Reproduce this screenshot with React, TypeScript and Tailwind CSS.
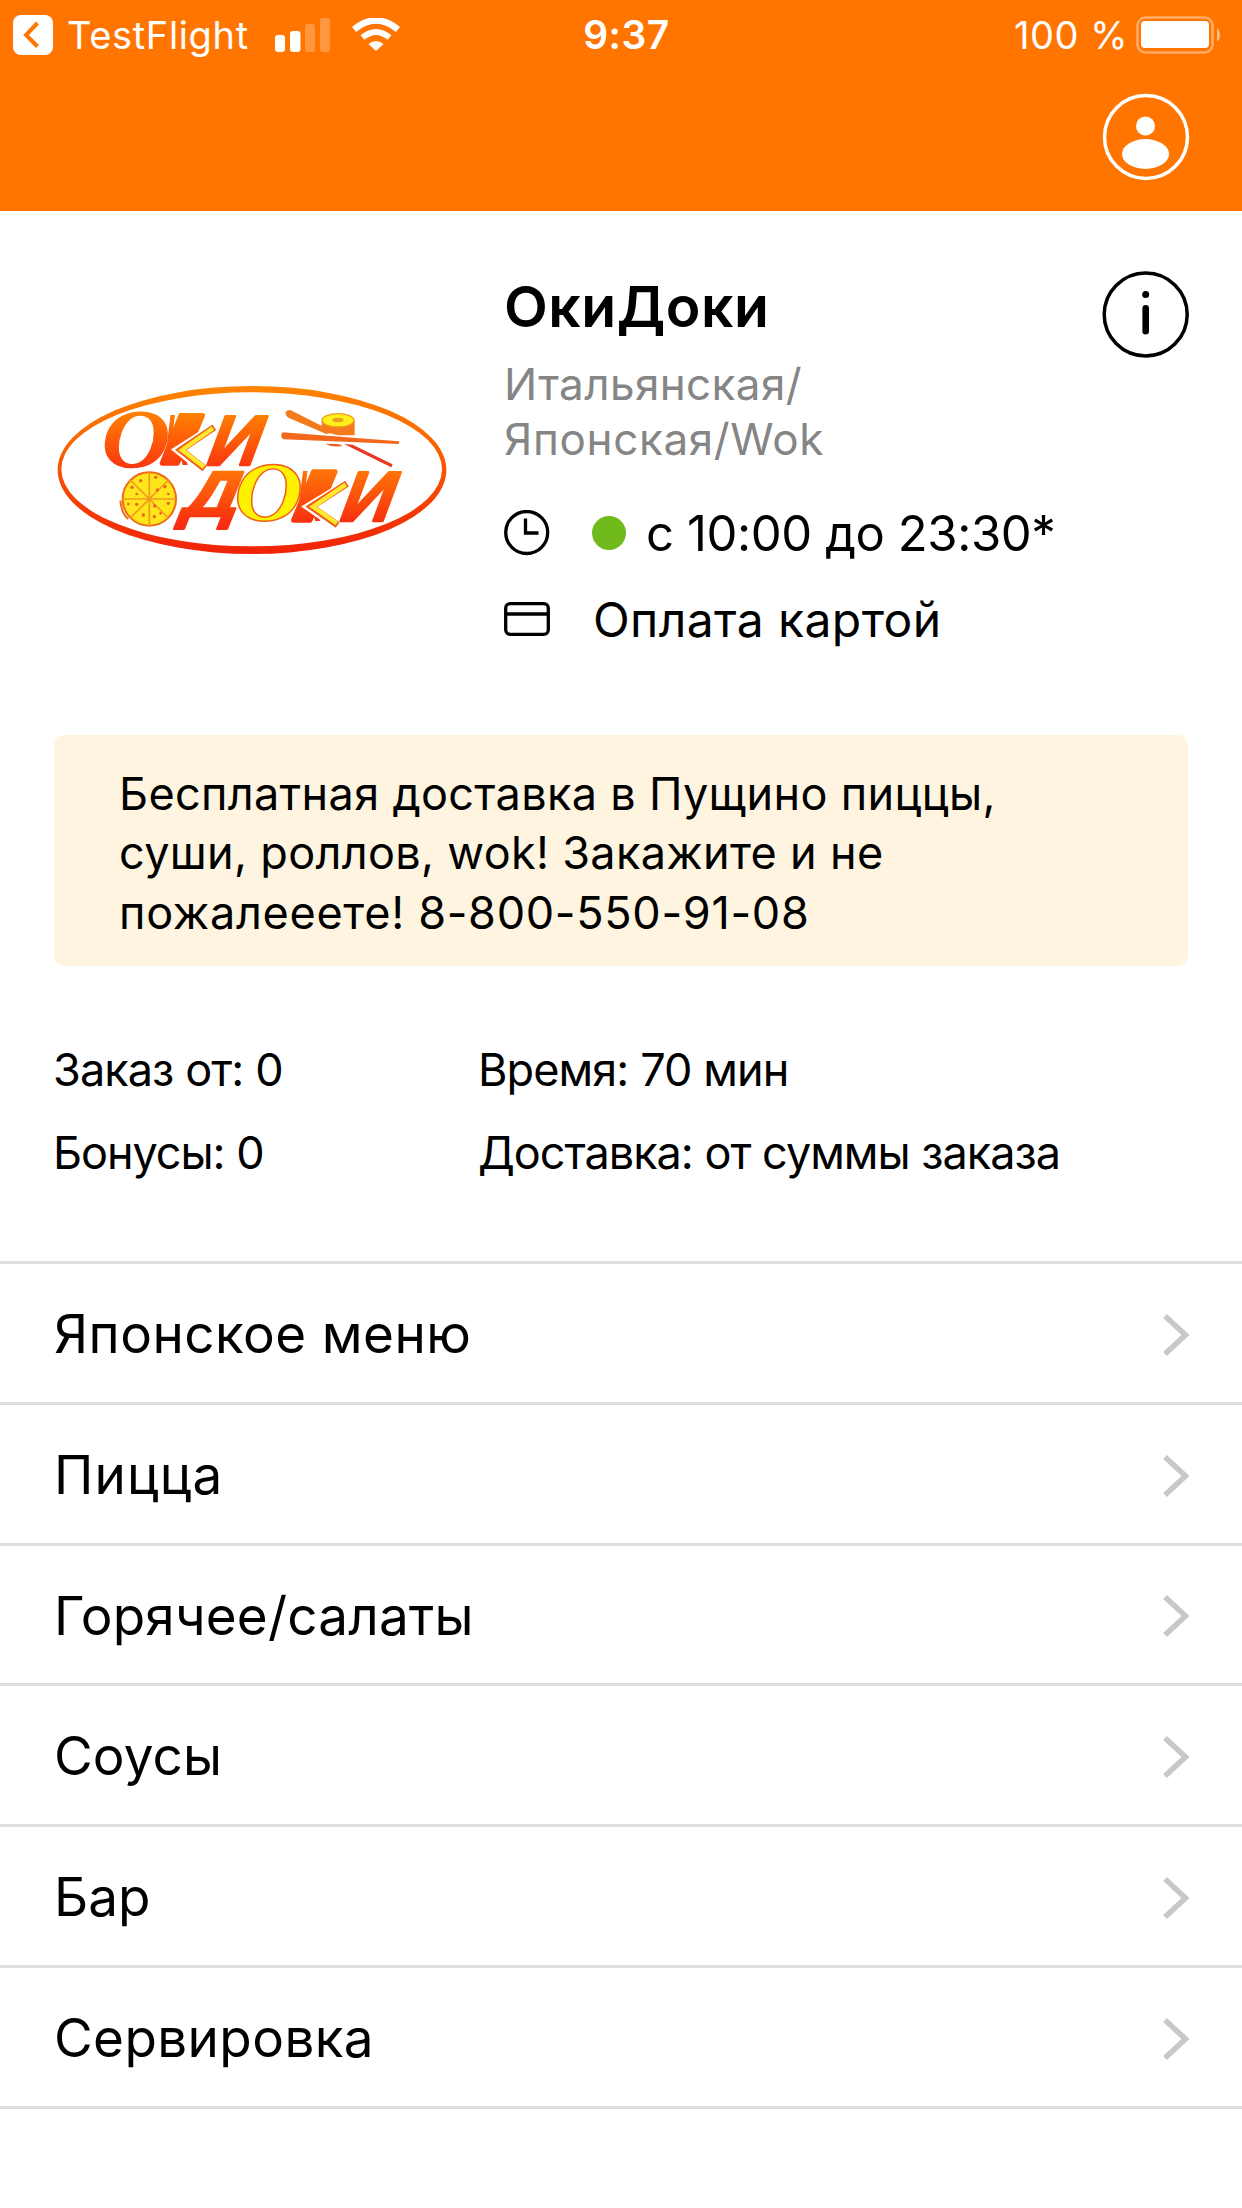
const menu = [
	{ title: "Японское меню", tracking: "tracking-[0.45px]" },
	{ title: "Пицца", tracking: "tracking-[1.1px]" },
	{ title: "Горячее/салаты", tracking: "tracking-[0.2px]" },
	{ title: "Соусы", tracking: "tracking-[0.1px]" },
	{ title: "Бар", tracking: "tracking-[0px]" },
	{ title: "Сервировка", tracking: "tracking-[0.4px]" },
];

function StatusBar() {
	return (
		<div className="flex h-[69px] items-center text-[38px] leading-none text-white">
			<div className="flex flex-1 items-center pl-[13px]">
				<svg className="h-10 w-10" viewBox="0 0 40 40">
					<rect width="40" height="40" rx="8" fill="#fff" />
					<path d="M24.5 8 13 20l11.5 11.5" fill="none" stroke="#ff7500" strokeWidth="4" />
				</svg>
				<span className="ml-[14px] w-[208px] tracking-[0.65px] whitespace-nowrap">TestFlight</span>
				<svg className="h-[34px] w-[55px]" viewBox="0 0 55 34" fill="#fff">
					<rect x="0" y="17" width="10" height="17" rx="3" />
					<rect x="15" y="13" width="10.500" height="21" rx="3" />
					<rect x="30" y="6" width="10" height="28" rx="3" opacity=".25" />
					<rect x="45" y="0" width="10" height="34" rx="3" opacity=".25" />
				</svg>
				<svg className="ml-[22px] h-[33px] w-[48px]" viewBox="0 0 48 33" fill="none" stroke="#fff">
					<path d="M2 11.500Q24-6.500 46 11.500" strokeWidth="6.500" />
					<path d="M10.500 19.500Q24 8.500 37.500 19.500" strokeWidth="6" />
					<path d="M16.500 26Q24 20 31.500 26L24 33Z" fill="#fff" stroke="none" />
				</svg>
			</div>
			<div className="ml-[16px] text-[39px] font-semibold tracking-[0.5px]">9:37</div>
			<div className="flex flex-1 items-center justify-end pr-[18px]">
				<span className="mr-[8px] tracking-[0.5px]">100 %</span>
				<svg className="h-[38px] w-[88px]" viewBox="0 0 88 38">
					<rect x="1.500" y="1.500" width="75" height="35" rx="8" fill="none" stroke="#ffac66" strokeWidth="2.500" />
					<rect x="5" y="5" width="68" height="27" rx="4" fill="#fff" />
					<path d="M81 12q6 7 0 14z" fill="#ffc38f" />
				</svg>
			</div>
		</div>
	);
}

function Logo() {
	return (
		<svg className="mt-[149px] ml-10 h-[220px] w-[420px] shrink-0" viewBox="0 0 1260 660">
			<defs>
				<linearGradient id="ring" gradientUnits="userSpaceOnUse" x1="0" y1="78" x2="0" y2="582">
					<stop offset="0" stopColor="#ff8500" />
					<stop offset="1" stopColor="#f02208" />
				</linearGradient>
				<linearGradient id="top" gradientUnits="userSpaceOnUse" x1="0" y1="150" x2="0" y2="325">
					<stop offset="0" stopColor="#ff8500" />
					<stop offset="1" stopColor="#fa3510" />
				</linearGradient>
				<linearGradient id="bottom" gradientUnits="userSpaceOnUse" x1="0" y1="320" x2="0" y2="495">
					<stop offset="0" stopColor="#ff7a08" />
					<stop offset="1" stopColor="#f82c10" />
				</linearGradient>
			</defs>
			<path
				fill="url(#ring)"
				fillRule="evenodd"
				d="M53 330a583 252 0 1 0 1166 0a583 252 0 1 0-1166 0M64 328a571 231 0 1 1 1142 0a571 231 0 1 1-1142 0"
			/>

			<g fill="url(#top)" stroke="url(#top)" strokeLinejoin="round">
				<text x="184" y="323" fontSize="254" textLength="208" lengthAdjust="spacingAndGlyphs" stroke="none" className="font-['Liberation_Serif'] font-bold italic">О</text>
				<path d="M422 166h66l-26 62-48 40 14 10-16 32h-46z" strokeWidth="14" />
				<text x="368" y="314" fontSize="214" textLength="84" lengthAdjust="spacingAndGlyphs" className="font-['Liberation_Sans'] italic" stroke="none">К</text>
				<text x="554" y="314" fontSize="212" textLength="154" lengthAdjust="spacingAndGlyphs" strokeWidth="8" transform="skewX(-10)" className="font-['Liberation_Sans'] font-bold italic">И</text>
			</g>
			<g fill="url(#bottom)" stroke="url(#bottom)" strokeLinejoin="round">
				<text x="508" y="467" fontSize="192" textLength="166" lengthAdjust="spacingAndGlyphs" strokeWidth="7" transform="skewX(-10)" className="font-['Liberation_Sans'] font-bold italic">Д</text>
				<path d="M820 335h66l-26 62-48 42 14 10-16 32h-50z" strokeWidth="14" />
				<text x="766" y="483" fontSize="214" textLength="84" lengthAdjust="spacingAndGlyphs" className="font-['Liberation_Sans'] italic" stroke="none">К</text>
				<text x="984" y="483" fontSize="212" textLength="154" lengthAdjust="spacingAndGlyphs" strokeWidth="8" transform="skewX(-10)" className="font-['Liberation_Sans'] font-bold italic">И</text>
			</g>
			<text x="583" y="483" fontSize="252" textLength="206" lengthAdjust="spacingAndGlyphs" fill="#fff200" stroke="#f06018" strokeWidth="4" className="font-['Liberation_Serif'] font-bold italic">О</text>

			<g fill="none">
				<path d="M526 200 416 270l78 61" stroke="#fff" strokeWidth="27" />
				<path d="M523 202 422 270l72 56" stroke="#f06018" strokeWidth="20" />
				<path d="M519 205 426 270l66 51" stroke="#ffe92e" strokeWidth="13" />
				<path d="M924 370 808 440l84 59" stroke="#fff" strokeWidth="27" />
				<path d="M921 371 814 440l79 55" stroke="#f06018" strokeWidth="20" />
				<path d="M917 374 819 440l71 50" stroke="#ffe92e" strokeWidth="13" />
			</g>

			{/* pizza */}
			<circle cx="328" cy="417" r="80" fill="#ffe61c" stroke="#f26a14" strokeWidth="6" />
			<path d="M328 337v160M248 417h160M271 360l114 114M385 360 271 474" stroke="#f29a1c" strokeWidth="5" />
			<path d="M241 422q4 40 24 55" fill="none" stroke="#f26a14" strokeWidth="6" />
			<g fill="#e8641c">
				<circle cx="302" cy="362" r="5" />
				<circle cx="347" cy="352" r="5" />
				<circle cx="375" cy="380" r="5" />
				<circle cx="352" cy="390" r="5" />
				<circle cx="276" cy="382" r="5" />
				<circle cx="290" cy="402" r="4" />
				<circle cx="385" cy="402" r="4" />
				<circle cx="290" cy="433" r="5" />
				<circle cx="265" cy="432" r="4" />
				<circle cx="310" cy="465" r="5" />
				<circle cx="343" cy="470" r="5" />
				<circle cx="344" cy="438" r="5" />
				<circle cx="385" cy="430" r="5" />
				<circle cx="362" cy="460" r="4" />
			</g>

			{/* chopsticks and roll */}
			<path d="M845 182v32l50 12h49v-44z" fill="#f47b1c" />
			<ellipse cx="894" cy="181" rx="48" ry="20" fill="#fff01c" stroke="#f29a1c" strokeWidth="4" />
			<ellipse cx="894" cy="180" rx="17" ry="7" fill="#e8a020" />
			<path d="M737 156q8-10 20-3l126 64-24 5-112-48q-12-7-10-18z" fill="#f47b1c" />
			<path d="M728 217 1076 244q4 4 0 8l-346-14q-12-9-2-21z" fill="#f3681c" />
			<path d="M855 251q22 12 53 7l-10-5z" fill="#f05a1c" />
			<path d="M912 252l26 2 118 58q4 8-4 9z" fill="#e93a20" />
		</svg>
	);
}

function Profile() {
	return (
		<svg className="h-[88px] w-[88px]" viewBox="0 0 88 88" fill="#fff">
			<circle cx="44" cy="44" r="41.500" fill="none" stroke="#fff" strokeWidth="3.500" />
			<circle cx="43.500" cy="33" r="9.500" />
			<ellipse cx="43.500" cy="61" rx="23.500" ry="15" />
		</svg>
	);
}

function Info() {
	return (
		<svg className="mt-[59px] mr-[52px] ml-auto h-[88px] w-[88px] shrink-0" viewBox="0 0 88 88">
			<circle cx="43.700" cy="44.500" r="41.500" fill="none" stroke="#000" strokeWidth="3.500" />
			<circle cx="43.700" cy="24.500" r="3.500" />
			<rect x="40.400" y="35" width="6.600" height="29.500" rx="3.300" />
		</svg>
	);
}

export default function App() {
	return (
		<div className="h-[2208px] w-[1242px] overflow-hidden bg-white font-[Inter,sans-serif] text-black">
			<header className="h-[211px] bg-[#ff7500]">
				<StatusBar />
				<div className="flex justify-end pt-[24px] pr-[52px]">
					<Profile />
				</div>
			</header>

			<section className="flex h-[524px]">
				<Logo />
				<div className="ml-[44px] pt-[64px] whitespace-nowrap">
					<h1 className="h-16 text-[57px] leading-[64px] font-semibold tracking-[0.5px]">ОкиДоки</h1>
					<p className="mt-[18px] text-[44px] leading-[55px] text-[#858585]">
						<span className="block tracking-[0.4px]">Итальянская/</span>
						<span className="block tracking-[0.65px]">Японская/Wok</span>
					</p>
					<div className="mt-[36px] flex h-[60px] items-center text-[49px]">
						<svg className="h-[46px] w-[46px]" viewBox="0 0 46 46" fill="none" stroke="#000" strokeWidth="3.300">
							<circle cx="22.700" cy="22.500" r="21" />
							<path d="M21.500 8.500v14.500H34.500" />
						</svg>
						<span className="ml-[42px] h-[34px] w-[34px] rounded-full bg-[#70ba1b]" />
						<span className="ml-[20px] pt-[2px] tracking-[-0.4px]">с 10:00 до 23:30*</span>
					</div>
					<div className="mt-[26px] flex h-[60px] items-center text-[48px]">
						<svg className="h-[34px] w-[46px]" viewBox="0 0 46 34" fill="none" stroke="#000" strokeWidth="3.300">
							<rect x="1.700" y="1.700" width="42.600" height="30.600" rx="4.500" />
							<path d="M1.500 12h43" />
						</svg>
						<span className="ml-[43px] pt-[2px] tracking-[0.4px]">Оплата картой</span>
					</div>
				</div>
				<Info />
			</section>

			<div className="mx-[54px] h-[231px] rounded-[10px] bg-[#fef4df] pt-[28.5px] pl-[65px] text-[45px] leading-[59.6px] whitespace-nowrap">
				<span className="block tracking-[0.33px]">Бесплатная доставка в Пущино пиццы,</span>
				<span className="block tracking-[0.33px]">суши, роллов, wok! Закажите и не</span>
				<span className="block tracking-[0.7px]">пожалееете! 8-800-550-91-08</span>
			</div>

			<div className="mt-[63px] grid grid-cols-[425px_1fr] pl-[53px] text-[45px] leading-[82.5px] whitespace-nowrap">
				<span className="tracking-[-0.9px]">Заказ от: 0</span>
				<span className="tracking-[-0.9px]">Время: 70 мин</span>
				<span className="tracking-[-1.05px]">Бонусы: 0</span>
				<span className="tracking-[-1px]">Доставка: от суммы заказа</span>
			</div>

			<ul className="mt-[67px] border-t-[3px] border-[#dfdfe0]">
				{menu.map((item) => (
					<li
						key={item.title}
						className="flex h-[140.75px] items-center justify-between border-b-[3px] border-[#dfdfe0] pt-[4px] pr-[53px] pl-[54px] text-[53px]"
					>
						<span className={item.tracking}>{item.title}</span>
						<svg className="h-[44px] w-[26px]" viewBox="0 0 26 44">
							<path d="M2 3 22.500 22 2 41" fill="none" stroke="#c7c7cc" strokeWidth="5.500" />
						</svg>
					</li>
				))}
			</ul>
		</div>
	);
}
